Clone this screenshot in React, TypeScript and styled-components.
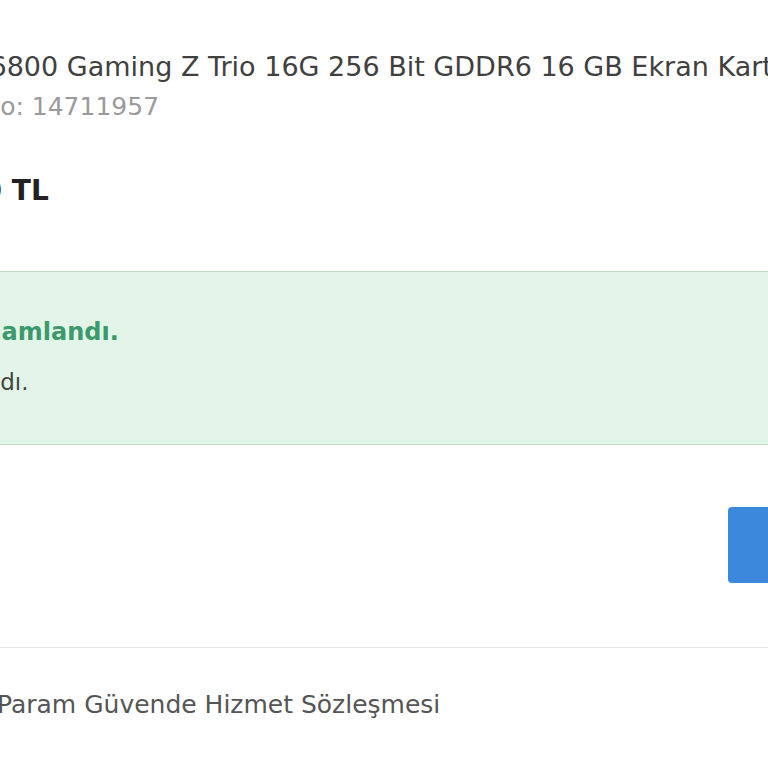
import React from "react";
import styled, { createGlobalStyle } from "styled-components";

const Global = createGlobalStyle`
  html, body { margin: 0; padding: 0; background: #ffffff; }
  body { font-family: "DejaVu Sans", Verdana, sans-serif; overflow: hidden; }
`;

const Page = styled.div`
  width: 768px;
  height: 768px;
  overflow: hidden;
  background: #fff;
`;

const Column = styled.div`
  display: flex;
  flex-direction: column;
  width: 1200px;
`;

const Line = styled.div<{ $shift: number }>`
  margin-left: ${(p) => p.$shift}px;
  white-space: nowrap;
`;

const Title = styled(Line)`
  margin-top: 48px;
  font-size: 27px;
  line-height: 38px;
  color: #404040;
`;

const AdNo = styled(Line)`
  margin-top: 6px;
  font-size: 25px;
  line-height: 30px;
  color: #9a9a9a;
`;

const Price = styled(Line)`
  margin-top: 49px;
  font-size: 28px;
  font-weight: 700;
  line-height: 40px;
  color: #222;
`;

const Alert = styled.div`
  margin-top: 60px;
  margin-left: -40px;
  height: 174px;
  background: #e3f4e8;
  border-top: 1px solid #b9dcc5;
  border-bottom: 1px solid #b9dcc5;
  display: flex;
  flex-direction: column;
  padding-top: 43px;
  box-sizing: border-box;
`;

const AlertTitle = styled(Line)`
  font-size: 24px;
  font-weight: 700;
  line-height: 34px;
  color: #3b9a6c;
`;

const AlertText = styled(Line)`
  margin-top: 18px;
  font-size: 23px;
  line-height: 30px;
  color: #444;
`;

const ActionRow = styled.div`
  display: flex;
  padding-left: 728px;
  margin-top: 62px;
`;

const Button = styled.div`
  width: 200px;
  height: 76px;
  background: #3b88dc;
  border-radius: 4px;
`;

const Divider = styled.div`
  margin-top: 64px;
  height: 1px;
  background: #e6e6e6;
`;

const Footer = styled(Line)`
  margin-top: 40px;
  font-size: 25px;
  line-height: 34px;
  color: #555;
`;

export default function App() {
  return (
    <>
      <Global />
      <Page>
        <Column>
          <Title $shift={-224}>MSI Radeon RX 6800 Gaming Z Trio 16G 256 Bit GDDR6 16 GB Ekran Kartı</Title>
          <AdNo $shift={-72}>İlan No: 14711957</AdNo>
          <Price $shift={-106}>16.500 TL</Price>
          <Alert>
            <AlertTitle $shift={-272}>İşleminiz başarıyla tamamlandı.</AlertTitle>
            <AlertText $shift={-175}>Ödemeniz onaylandı.</AlertText>
          </Alert>
          <ActionRow>
            <Button />
          </ActionRow>
          <Divider />
          <Footer $shift={-3}>Param Güvende Hizmet Sözleşmesi</Footer>
        </Column>
      </Page>
    </>
  );
}
